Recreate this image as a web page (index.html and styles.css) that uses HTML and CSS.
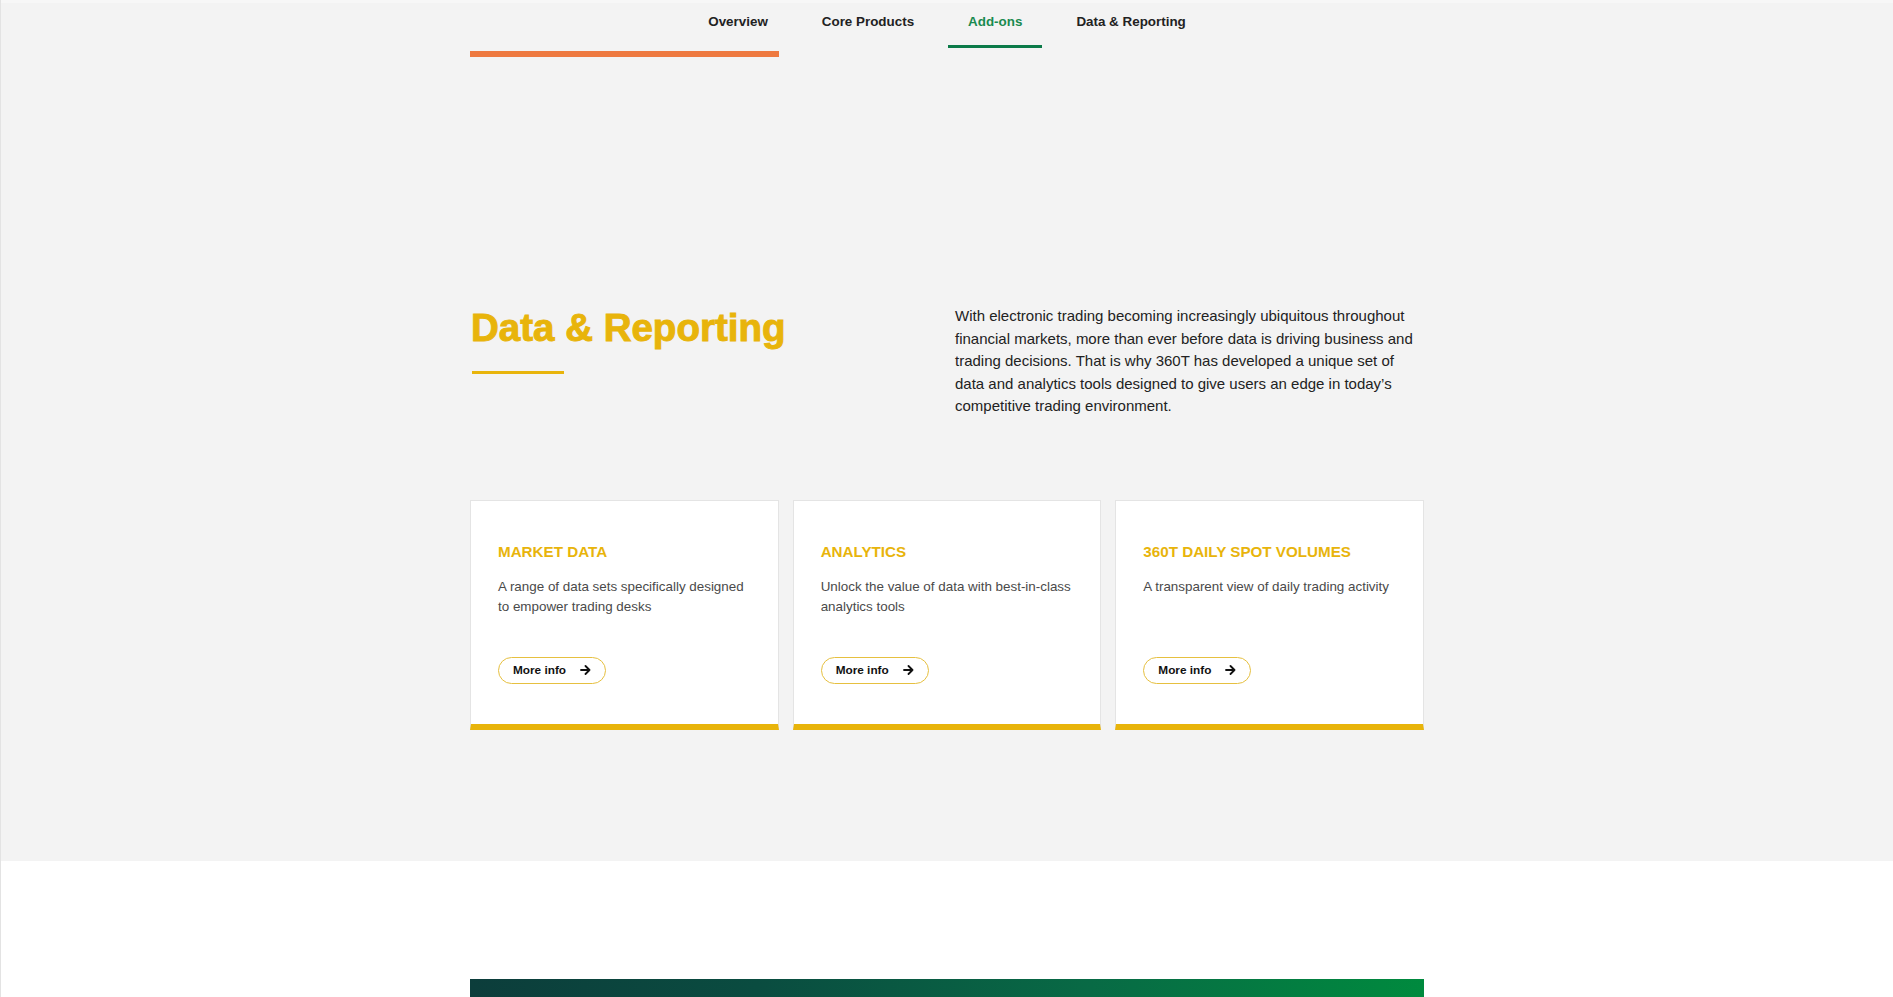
FILE: index.html
```html
<!DOCTYPE html>
<html>
<head>
  <meta charset="utf-8">
  <link rel="stylesheet" href="styles.css">
</head>
<body>
  <div class="subnav">
    <div class="tabs">
      <a href="#" class="tab">Overview</a>
      <a href="#" class="tab">Core Products</a>
      <a href="#" class="tab active">Add-ons</a>
      <a href="#" class="tab">Data &amp; Reporting</a>
    </div>
    <div class="container">
      <div class="progress-track">
        <div class="progress-fill" style="width: 32.4%;"></div>
      </div>
    </div>
  </div>

  <section class="section section-grey">
    <div class="container">
      <div class="intro">
        <div class="intro-title">
          <h2>Data &amp; Reporting</h2>
          <div class="title-rule"></div>
        </div>
        <p class="intro-text">With electronic trading becoming increasingly ubiquitous throughout financial markets, more than ever before data is driving business and trading decisions. That is why 360T has developed a unique set of data and analytics tools designed to give users an edge in today’s competitive trading environment.</p>
      </div>

      <div class="cards">
        <div class="card">
          <h3>MARKET DATA</h3>
          <p>A range of data sets specifically designed to empower trading desks</p>
          <a href="#" class="btn-more">More info
            <svg width="11" height="10" viewBox="0 0 11 10"><path d="M1 5h8.5M5.5 1l4 4-4 4" fill="none" stroke="#111" stroke-width="1.8" stroke-linecap="round" stroke-linejoin="round"/></svg>
          </a>
        </div>
        <div class="card">
          <h3>ANALYTICS</h3>
          <p>Unlock the value of data with best-in-class analytics tools</p>
          <a href="#" class="btn-more">More info
            <svg width="11" height="10" viewBox="0 0 11 10"><path d="M1 5h8.5M5.5 1l4 4-4 4" fill="none" stroke="#111" stroke-width="1.8" stroke-linecap="round" stroke-linejoin="round"/></svg>
          </a>
        </div>
        <div class="card">
          <h3>360T DAILY SPOT VOLUMES</h3>
          <p>A transparent view of daily trading activity</p>
          <a href="#" class="btn-more">More info
            <svg width="11" height="10" viewBox="0 0 11 10"><path d="M1 5h8.5M5.5 1l4 4-4 4" fill="none" stroke="#111" stroke-width="1.8" stroke-linecap="round" stroke-linejoin="round"/></svg>
          </a>
        </div>
      </div>
    </div>
  </section>

  <section class="section section-white">
    <div class="container">
      <div class="banner"></div>
    </div>
  </section>
</body>
</html>
```

FILE: styles.css
```css
body {
  margin: 0;
  font-family: "Liberation Sans", Arial, sans-serif;
  background: #f3f3f3;
  color: #222;
  border-left: 1px solid #e3e3e3;
}

.container {
  width: 954px;
  margin: 0 auto;
}

/* sticky sub navigation */
.subnav {
  background: #f3f3f3;
  border-top: 3px solid #f7f7f7;
}

.tabs {
  display: flex;
  justify-content: center;
  gap: 14px;
}

.tab {
  padding: 9px 20px 13px;
  line-height: 20px;
  font-size: 13.4px;
  font-weight: 700;
  color: #222;
  text-decoration: none;
  border-bottom: 3px solid transparent;
}

.tab.active {
  color: #198a4f;
  border-bottom-color: #0b7a48;
}

.progress-track {
  margin-top: 3px;
  height: 6px;
}

.progress-fill {
  height: 100%;
  background: #ee7940;
}

/* sections */
.section-grey {
  padding: 248px 0 131px;
}

.section-white {
  background: #fff;
  padding-top: 118px;
}

.intro {
  display: grid;
  grid-template-columns: 1fr 1fr;
  gap: 16px;
}

.intro-title h2 {
  margin: 0;
  font-size: 38.5px;
  line-height: 46px;
  font-weight: 900;
  color: #e8b40b;
  -webkit-text-stroke: 1px #e8b40b;
  padding-left: 1px;
}

.title-rule {
  width: 92px;
  height: 3px;
  margin: 20px 0 0 2px;
  background: #e8b40b;
}

.intro-text {
  margin: 0;
  font-size: 15px;
  line-height: 22.5px;
  color: #222;
}

/* cards */
.cards {
  display: grid;
  grid-template-columns: repeat(3, 1fr);
  gap: 14px;
  margin-top: 82px;
}

.card {
  display: flex;
  flex-direction: column;
  align-items: flex-start;
  background: #fff;
  border: 1px solid #e4e4e4;
  border-bottom: 6px solid #e8b40b;
  padding: 42px 27px 40px;
}

.card h3 {
  margin: 0;
  font-size: 15.2px;
  line-height: 18px;
  font-weight: 700;
  color: #e8b40b;
}

.card p {
  margin: 16px 0 40px;
  font-size: 13.4px;
  line-height: 20px;
  color: #4a4a4a;
  min-height: 40px;
}

.btn-more {
  margin-top: auto;
  display: inline-flex;
  align-items: center;
  gap: 14px;
  height: 25px;
  padding: 0 14px 0 14px;
  border: 1px solid #e6c040;
  border-radius: 14px;
  font-size: 11.8px;
  font-weight: 700;
  color: #111;
  text-decoration: none;
}

.banner {
  height: 40px;
  background: linear-gradient(90deg, #0c3d3b 0%, #0a4c40 30%, #086a45 65%, #008a3e 100%);
}
```
